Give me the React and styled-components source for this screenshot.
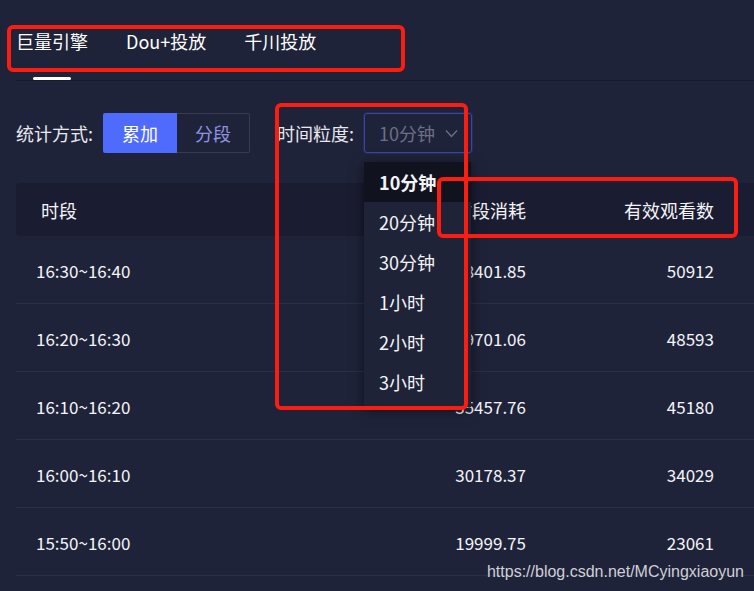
import React from "react";
import styled, { createGlobalStyle } from "styled-components";

const GlobalStyle = createGlobalStyle`
  html, body {
    margin: 0;
    padding: 0;
    background: #1f2339;
  }
  * {
    box-sizing: border-box;
  }
`;

const tabs = ["巨量引擎", "Dou+投放", "千川投放"];
const options = ["10分钟", "20分钟", "30分钟", "1小时", "2小时", "3小时"];
const rows = [
  ["16:30~16:40", "38401.85", "50912"],
  ["16:20~16:30", "39701.06", "48593"],
  ["16:10~16:20", "35457.76", "45180"],
  ["16:00~16:10", "30178.37", "34029"],
  ["15:50~16:00", "19999.75", "23061"],
];

const App = () => {
  return (
    <>
      <GlobalStyle />
      <Page>
        <TabBar>
          {tabs.map((t, i) => (
            <Tab key={t} $active={i === 0}>
              {t}
            </Tab>
          ))}
        </TabBar>

        <FilterRow>
          <Label>统计方式:</Label>
          <Segmented>
            <SegButton $active>累加</SegButton>
            <SegButton>分段</SegButton>
          </Segmented>
          <Label $gap>时间粒度:</Label>
          <SelectWrap>
            <SelectBox>
              <span>10分钟</span>
              <svg width="13" height="9" viewBox="0 0 13 9" fill="none">
                <polyline points="1,1.5 6.5,7.5 12,1.5" stroke="#6c7087" strokeWidth="1.3" />
              </svg>
            </SelectBox>
            <Menu>
              {options.map((o, i) => (
                <MenuItem key={o} $selected={i === 0}>
                  {o}
                </MenuItem>
              ))}
            </Menu>
          </SelectWrap>
        </FilterRow>

        <Table>
          <HeadRow>
            <Cell>时段</Cell>
            <Cell $right>时段消耗</Cell>
            <Cell $right>有效观看数</Cell>
          </HeadRow>
          {rows.map((r) => (
            <BodyRow key={r[0]}>
              <Cell>{r[0]}</Cell>
              <Cell $right>{r[1]}</Cell>
              <Cell $right>{r[2]}</Cell>
            </BodyRow>
          ))}
        </Table>

        <Mark $x={7} $y={25} $w={398} $h={47} />
        <Mark $x={275} $y={103} $w={193} $h={307} />
        <Mark $x={437} $y={177} $w={301} $h={61} />

        <Watermark>https://blog.csdn.net/MCyingxiaoyun</Watermark>
      </Page>
    </>
  );
};

const Page = styled.div`
  position: relative;
  width: 754px;
  height: 591px;
  overflow: hidden;
  padding-left: 16px;
  background: #1f2339;
  color: #f2f2f6;
  font-family: "Noto Sans CJK SC", "Noto Sans", sans-serif;
  font-size: 18px;
`;

const TabBar = styled.div`
  display: flex;
  gap: 38px;
  height: 81px;
  border-bottom: 1px solid #16192a;
`;

const Tab = styled.div`
  position: relative;
  height: 80px;
  padding-top: 28px;
  line-height: 26px;
  color: #ffffff;
  white-space: nowrap;
  &::after {
    content: "";
    display: ${(p) => (p.$active ? "block" : "none")};
    position: absolute;
    left: 50%;
    bottom: 0;
    width: 38px;
    height: 3px;
    margin-left: -19px;
    border-radius: 2px;
    background: #ffffff;
  }
`;

const FilterRow = styled.div`
  display: flex;
  align-items: center;
  margin-top: 32px;
  height: 40px;
`;

const Label = styled.span`
  margin-right: 10px;
  margin-left: ${(p) => (p.$gap ? "27px" : "0")};
  color: #e9e9ef;
  white-space: nowrap;
`;

const Segmented = styled.div`
  display: flex;
  height: 40px;
`;

const SegButton = styled.div`
  width: ${(p) => (p.$active ? "74px" : "73px")};
  display: flex;
  align-items: center;
  justify-content: center;
  background: ${(p) => (p.$active ? "#4f6bfd" : "transparent")};
  color: ${(p) => (p.$active ? "#ffffff" : "#8d95e2")};
  border: ${(p) => (p.$active ? "none" : "1px solid #383c52")};
  border-left: none;
  border-radius: ${(p) => (p.$active ? "2px 0 0 2px" : "0 2px 2px 0")};
`;

const SelectWrap = styled.div`
  position: relative;
`;

const SelectBox = styled.div`
  width: 108px;
  height: 40px;
  display: flex;
  align-items: center;
  justify-content: space-between;
  padding: 0 13px 0 14px;
  border: 1px solid #3a46a6;
  border-radius: 3px;
  box-shadow: 0 0 0 1px rgba(58, 70, 166, 0.25);
  color: #6c7087;
`;

const Menu = styled.div`
  position: absolute;
  top: 49px;
  left: 0;
  width: 107px;
  padding-bottom: 5px;
  background: #1f2337;
  box-shadow: 0 3px 12px rgba(0, 0, 0, 0.5);
  z-index: 5;
`;

const MenuItem = styled.div`
  height: 40px;
  line-height: 40px;
  padding-left: 15px;
  font-weight: ${(p) => (p.$selected ? 700 : 400)};
  background: ${(p) => (p.$selected ? "#10121e" : "transparent")};
  color: #f4f4f8;
`;

const Table = styled.div`
  margin-top: 30px;
  width: 738px;
`;

const HeadRow = styled.div`
  display: grid;
  grid-template-columns: 1fr 160px 188px;
  align-items: center;
  height: 53px;
  padding: 0 40px 0 25px;
  background: #1a1c31;
  border-radius: 4px 0 0 4px;
  color: #f4f4f8;
`;

const BodyRow = styled.div`
  display: grid;
  grid-template-columns: 1fr 160px 188px;
  align-items: center;
  height: 68px;
  padding: 1px 40px 0 20px;
  border-bottom: 1px solid #2b2f47;
  color: #f4f4f8;
  font-size: 17px;
`;

const Cell = styled.div`
  text-align: ${(p) => (p.$right ? "right" : "left")};
  white-space: nowrap;
`;

const Mark = styled.div`
  position: absolute;
  left: ${(p) => p.$x}px;
  top: ${(p) => p.$y}px;
  width: ${(p) => p.$w}px;
  height: ${(p) => p.$h}px;
  border: 4px solid #fb1d12;
  border-radius: 6px;
  z-index: 10;
  pointer-events: none;
`;

const Watermark = styled.div`
  position: absolute;
  right: 10px;
  bottom: 10px;
  font-family: "Liberation Sans", Arial, sans-serif;
  font-size: 16px;
  line-height: 18px;
  color: #cfd0d6;
  z-index: 11;
`;

export default App;
